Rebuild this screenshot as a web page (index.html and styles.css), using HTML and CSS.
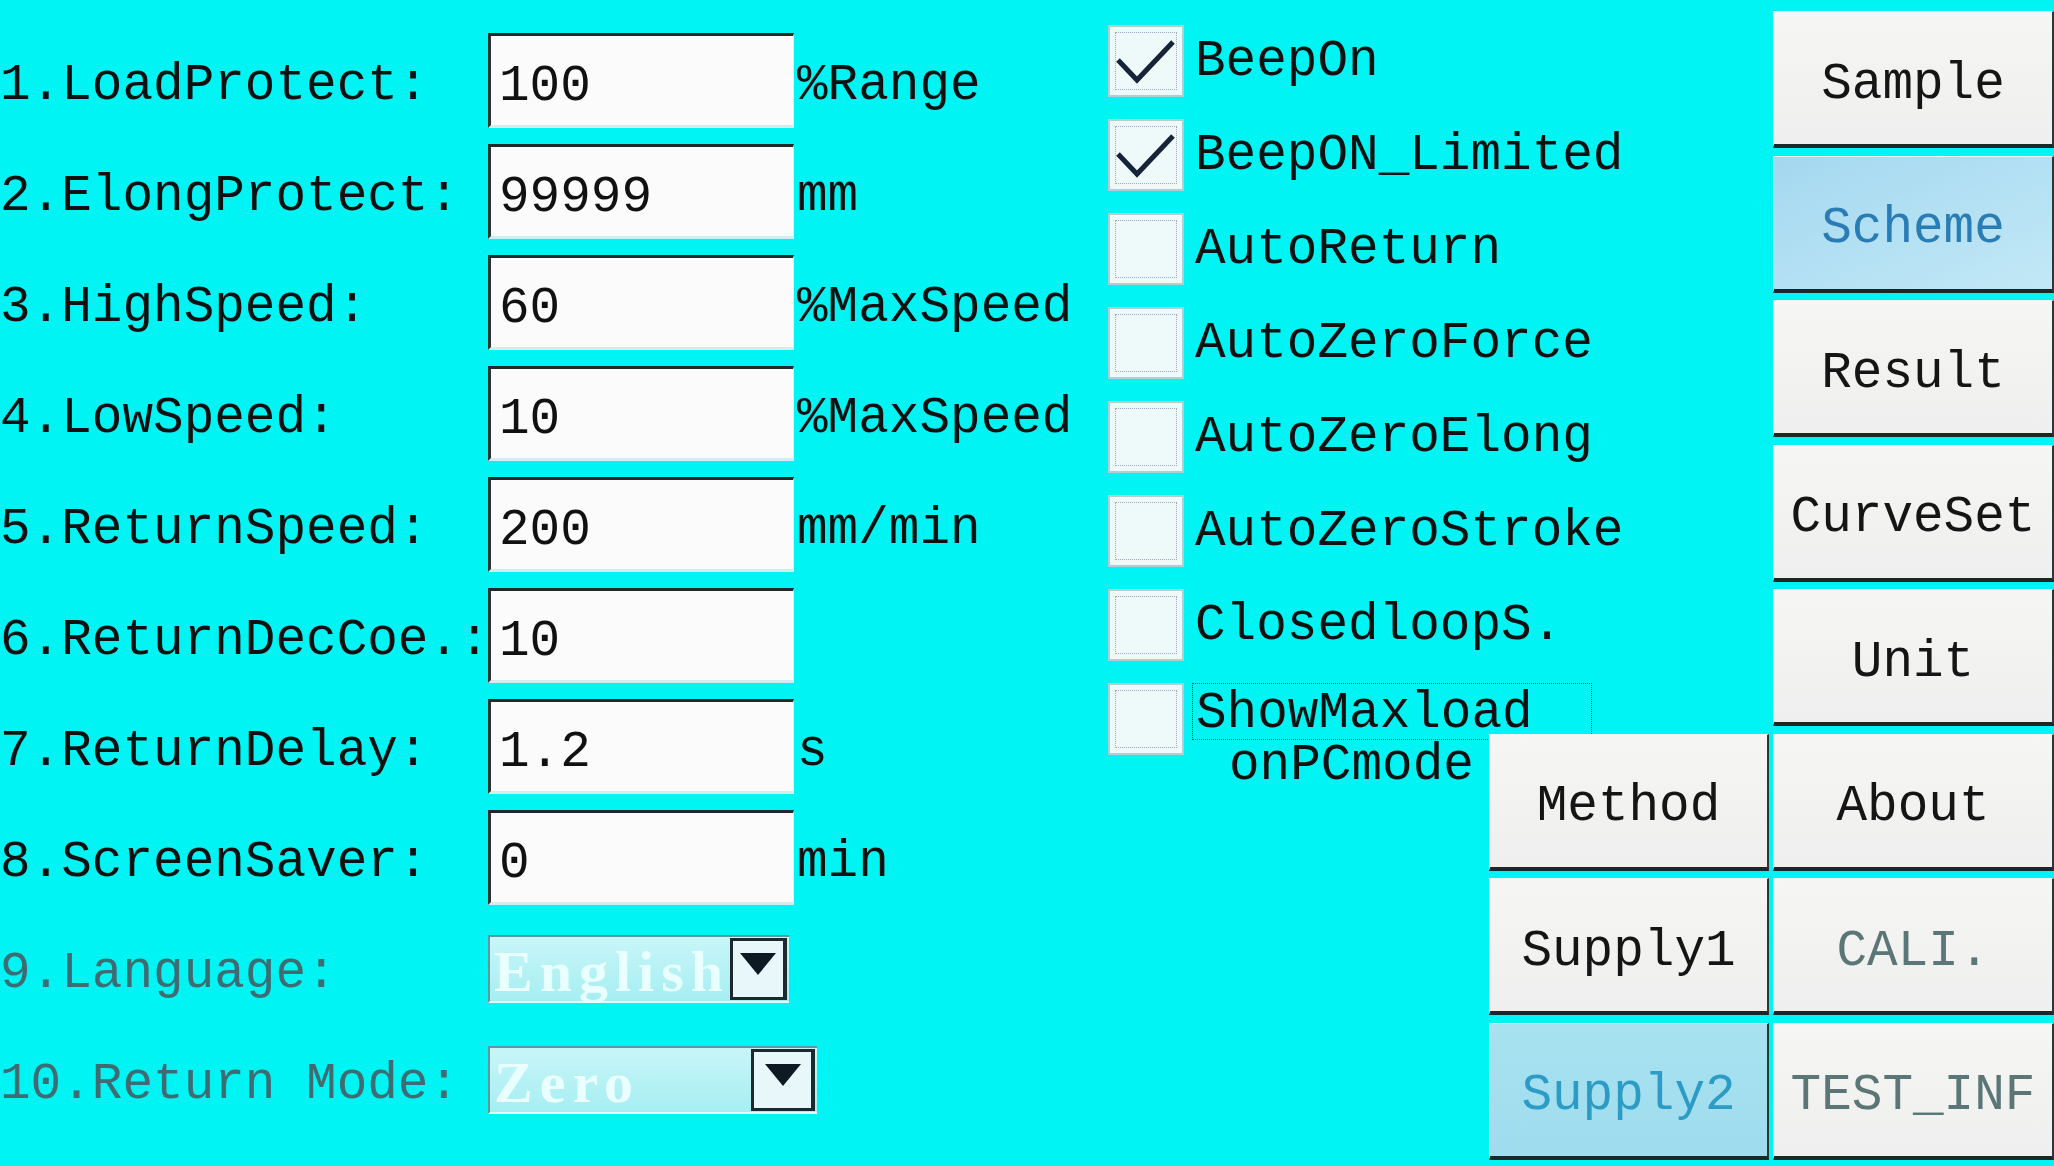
FILE: index.html
```html
<!DOCTYPE html>
<html lang="en">
<head>
    <meta charset="UTF-8">
    <meta name="viewport" content="width=device-width, initial-scale=1.0">
    <title>Scheme</title>
    <link rel="stylesheet" href="styles.css">
</head>
<body>

<div class="screen">

    <!-- Parameter fields -->
    <div class="form">
        <div class="row"><span class="label">1.LoadProtect:</span><input class="field" type="text" value="100"><span class="unit">%Range</span></div>
        <div class="row"><span class="label">2.ElongProtect:</span><input class="field" type="text" value="99999"><span class="unit">mm</span></div>
        <div class="row"><span class="label">3.HighSpeed:</span><input class="field" type="text" value="60"><span class="unit">%MaxSpeed</span></div>
        <div class="row"><span class="label">4.LowSpeed:</span><input class="field" type="text" value="10"><span class="unit">%MaxSpeed</span></div>
        <div class="row"><span class="label">5.ReturnSpeed:</span><input class="field" type="text" value="200"><span class="unit">mm/min</span></div>
        <div class="row"><span class="label">6.ReturnDecCoe.:</span><input class="field" type="text" value="10"><span class="unit"></span></div>
        <div class="row"><span class="label">7.ReturnDelay:</span><input class="field" type="text" value="1.2"><span class="unit">s</span></div>
        <div class="row"><span class="label">8.ScreenSaver:</span><input class="field" type="text" value="0"><span class="unit">min</span></div>
        <div class="row disabled">
            <span class="label">9.Language:</span>
            <div class="select lang">
                <span class="select-text">English</span>
                <span class="arrow"><svg width="40" height="26" viewBox="0 0 40 26"><polygon points="2,2 38,2 20,24" fill="#0d1a24"/></svg></span>
            </div>
        </div>
        <div class="row disabled">
            <span class="label">10.Return Mode:</span>
            <div class="select mode">
                <span class="select-text">Zero</span>
                <span class="arrow"><svg width="40" height="26" viewBox="0 0 40 26"><polygon points="2,2 38,2 20,24" fill="#0d1a24"/></svg></span>
            </div>
        </div>
    </div>

    <!-- Options and navigation -->
    <div class="side">
        <div class="options">
            <div class="option"><span class="box"><svg width="76" height="72" viewBox="0 0 76 72"><polyline points="10,35 29,55 65,17" fill="none" stroke="#16243a" stroke-width="5"/></svg></span><span class="text">BeepOn</span></div>
            <div class="option"><span class="box"><svg width="76" height="72" viewBox="0 0 76 72"><polyline points="10,35 29,55 65,17" fill="none" stroke="#16243a" stroke-width="5"/></svg></span><span class="text">BeepON_Limited</span></div>
            <div class="option"><span class="box"></span><span class="text">AutoReturn</span></div>
            <div class="option"><span class="box"></span><span class="text">AutoZeroForce</span></div>
            <div class="option"><span class="box"></span><span class="text">AutoZeroElong</span></div>
            <div class="option"><span class="box"></span><span class="text">AutoZeroStroke</span></div>
            <div class="option"><span class="box"></span><span class="text">ClosedloopS.</span></div>
            <div class="option top"><span class="box"></span><span class="text"><span class="focus">ShowMaxload</span><span class="second">onPCmode</span></span></div>
        </div>

        <button class="btn nav">Sample</button>
        <button class="btn nav active">Scheme</button>
        <button class="btn nav">Result</button>
        <button class="btn nav">CurveSet</button>
        <button class="btn nav">Unit</button>
        <button class="btn nav">About</button>
        <button class="btn nav off">CALI.</button>
        <button class="btn nav off">TEST_INF</button>

        <button class="btn sub row-6">Method</button>
        <button class="btn sub row-7">Supply1</button>
        <button class="btn sub row-8 active">Supply2</button>
    </div>

</div>

</body>
</html>
```

FILE: styles.css
```css
body {
    margin: 0;
    padding: 0;
    background-color: #00f4f4;
    font-family: "Liberation Mono", "DejaVu Sans Mono", monospace;
    font-size: 51px;
    color: #111;
    overflow: hidden;
}

.screen {
    display: flex;
    width: 2054px;
    height: 1166px;
}

/* Left column: numbered parameters */
.form {
    width: 1108px;
    display: flex;
    flex-direction: column;
    gap: 16px;
    padding-top: 33px;
}

.row {
    display: flex;
    align-items: center;
    height: 95px;
}

.label {
    width: 488px;
    flex-shrink: 0;
    padding-top: 10px;
    white-space: nowrap;
}

.field {
    box-sizing: border-box;
    width: 306px;
    height: 95px;
    margin: 0;
    padding: 12px 0 0 8px;
    font-family: inherit;
    font-size: 51px;
    color: #111;
    background-color: #fbfbfb;
    border-top: 3px solid #1e2a2a;
    border-left: 3px solid #2a3434;
    border-right: 1px solid #e4eeee;
    border-bottom: 3px solid #d4ecee;
    outline: none;
}

.unit {
    margin-left: 3px;
    padding-top: 10px;
    white-space: nowrap;
}

.row.disabled .label {
    color: #3e6c72;
}

.select {
    box-sizing: border-box;
    height: 68px;
    display: flex;
    align-items: center;
    justify-content: space-between;
    background: linear-gradient(to bottom, #c8f6f8, #a6eef2);
    border-top: 2px solid #5a9aa0;
    border-left: 2px solid #5a9aa0;
    border-bottom: 2px solid #e0fcfc;
    padding-left: 4px;
}

.select.lang {
    width: 301px;
}

.select.mode {
    width: 329px;
}

.select-text {
    color: #eaffff;
    font-family: "Liberation Serif", serif;
    font-weight: bold;
    font-size: 58px;
    letter-spacing: 7px;
    padding-top: 6px;
}

.arrow {
    box-sizing: border-box;
    width: 64px;
    height: 62px;
    margin-right: 2px;
    display: flex;
    justify-content: center;
    padding-top: 10px;
    background-color: #e8f8fa;
    border: 3px solid #1c2a30;
    border-right-width: 4px;
    border-bottom-width: 3px;
}

/* Right side: options and buttons */
.side {
    flex: 1;
    display: grid;
    grid-template-columns: 377px 280px 1fr;
    grid-template-rows: repeat(8, 137px);
    column-gap: 4px;
    row-gap: 7.5px;
    padding-top: 11px;
}

.options {
    grid-column: 1 / 3;
    grid-row: 1 / 9;
    display: flex;
    flex-direction: column;
    gap: 22px;
    margin-top: 14px;
}

.option {
    display: flex;
    align-items: center;
    gap: 11px;
    height: 72px;
    white-space: nowrap;
}

.option.top {
    align-items: flex-start;
}

.box {
    box-sizing: border-box;
    width: 76px;
    height: 72px;
    flex-shrink: 0;
    background-color: #eef9f9;
    border: 2px solid #b4cdd0;
    outline: 1px dotted #9ab;
    outline-offset: -8px;
    display: flex;
}

.box svg {
    margin: -2px;
}

.option.top .text {
    display: flex;
    flex-direction: column;
}

.focus {
    box-sizing: border-box;
    width: 400px;
    height: 57px;
    margin-left: -3px;
    padding: 4px 0 0 3px;
    border: 1px dotted #445;
    line-height: 52px;
}

.second {
    padding-left: 34px;
    line-height: 52px;
}

.btn {
    box-sizing: border-box;
    margin: 0;
    padding: 12px 0 0 0;
    font-family: inherit;
    font-size: 51px;
    color: #151515;
    background: linear-gradient(to bottom, #f6f6f4, #eeefee);
    border: 1px solid #2a3838;
    border-top-color: #f4f8f8;
    border-left-color: #f4f8f8;
    border-right: 2px solid #2a3838;
    border-bottom: 4px solid #1a2828;
    cursor: pointer;
}

.btn.nav {
    grid-column: 3;
}

.btn.sub {
    grid-column: 2;
}

.row-6 { grid-row: 6; }
.row-7 { grid-row: 7; }
.row-8 { grid-row: 8; }

.btn.active {
    background: linear-gradient(to bottom right, #a4d8f0, #c2e8f6);
    color: #2a7cb4;
}

.btn.sub.active {
    background: linear-gradient(to bottom, #a8e2f0, #9edcee);
    color: #2c9cc6;
}

.btn.off {
    color: #5a7676;
}
```
